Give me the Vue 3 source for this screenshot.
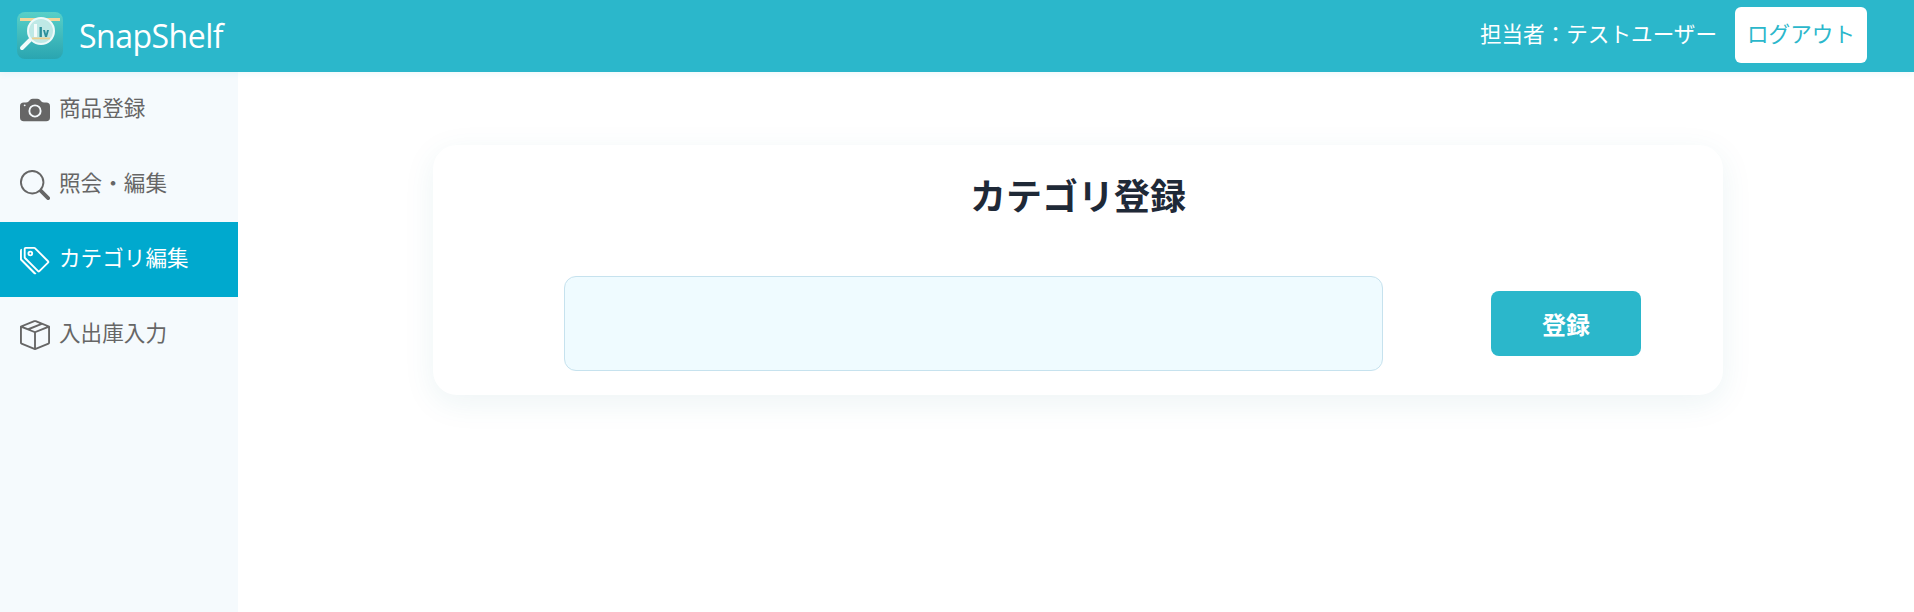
<script setup>
const nav = [
  { label: '商品登録', icon: 'camera' },
  { label: '照会・編集', icon: 'search' },
  { label: 'カテゴリ編集', icon: 'tags', active: true },
  { label: '入出庫入力', icon: 'box' },
]
</script>

<template>
  <div class="page">
    <header class="topbar">
      <div class="brand">
        <svg class="logo" viewBox="0 0 46 47" aria-hidden="true">
          <defs>
            <linearGradient id="lg" x1="0" y1="0" x2="0" y2="1">
              <stop offset="0" stop-color="#58d0c8" />
              <stop offset="1" stop-color="#2aa5b0" />
            </linearGradient>
          </defs>
          <rect width="46" height="47" rx="8" fill="url(#lg)" />
          <rect x="3" y="6" width="40" height="3" fill="#f3d69a" />
          <line x1="13" y1="28" x2="5" y2="36" stroke="#f2fbfb" stroke-width="4" stroke-linecap="round" />
          <circle cx="24" cy="19" r="13" fill="#bfe9e6" stroke="#eefafa" stroke-width="2" />
          <rect x="17" y="12" width="3" height="13" fill="#f4fbfb" />
          <rect x="22.5" y="15" width="2.4" height="10" fill="#2c8f9a" />
          <path d="M26 18h2l1 4 1-4h2l-2 7h-2z" fill="#2c8f9a" />
          <rect x="15" y="25.5" width="18" height="1.8" fill="#ecd08f" />
        </svg>
        <span class="brand-name">SnapShelf</span>
      </div>
      <div class="user">
        <span class="user-name">担当者：テストユーザー</span>
        <button class="logout" type="button">ログアウト</button>
      </div>
    </header>

    <div class="body">
      <aside class="sidebar">
        <a v-for="item in nav" :key="item.label" class="nav-item" :class="{ active: item.active }">
          <svg class="icon" viewBox="0 0 16 16" fill="currentColor" aria-hidden="true">
            <template v-if="item.icon === 'camera'">
              <path d="M10.5 8.5a2.5 2.5 0 1 1-5 0 2.5 2.5 0 0 1 5 0z" />
              <path d="M2 4a2 2 0 0 0-2 2v6a2 2 0 0 0 2 2h12a2 2 0 0 0 2-2V6a2 2 0 0 0-2-2h-1.172a2 2 0 0 1-1.414-.586l-.828-.828A2 2 0 0 0 9.172 2H6.828a2 2 0 0 0-1.414.586l-.828.828A2 2 0 0 1 3.172 4H2zm.5 2a.5.5 0 1 1 0-1 .5.5 0 0 1 0 1zm9 2.5a3.5 3.5 0 1 1-7 0 3.5 3.5 0 0 1 7 0z" />
            </template>
            <path v-else-if="item.icon === 'search'" d="M11.742 10.344a6.5 6.5 0 1 0-1.397 1.398h-.001c.03.04.062.078.098.115l3.85 3.85a1 1 0 0 0 1.415-1.414l-3.85-3.85a1.007 1.007 0 0 0-.115-.1zM12 6.5a5.5 5.5 0 1 1-11 0 5.5 5.5 0 0 1 11 0z" />
            <template v-else-if="item.icon === 'tags'">
              <path d="M3 2v4.586l7 7L14.586 9l-7-7H3zM2 2a1 1 0 0 1 1-1h4.586a1 1 0 0 1 .707.293l7 7a1 1 0 0 1 0 1.414l-4.586 4.586a1 1 0 0 1-1.414 0l-7-7A1 1 0 0 1 2 6.586V2z" />
              <path d="M5.5 5a.5.5 0 1 1 0-1 .5.5 0 0 1 0 1zm0 1a1.5 1.5 0 1 0 0-3 1.5 1.5 0 0 0 0 3zM1 7.086a1 1 0 0 0 .293.707L8.75 15.25l-.043.043a1 1 0 0 1-1.414 0l-7-7A1 1 0 0 1 0 7.586V3a1 1 0 0 1 1-1v5.086z" />
            </template>
            <path v-else d="M8.186 1.113a.5.5 0 0 0-.372 0L1.846 3.5l2.404.961L10.404 2l-2.218-.887zm3.564 1.426L5.596 5 8 5.961 14.154 3.5l-2.404-.961zm3.25 1.7-6.5 2.6v7.922l6.5-2.6V4.24zM7.5 14.762V6.838L1 4.239v7.925l6.5 2.6zM7.443.184a1.5 1.5 0 0 1 1.114 0l7.129 2.852A.5.5 0 0 1 16 3.5v8.662a1 1 0 0 1-.629.928l-7.185 2.874a.5.5 0 0 1-.372 0L.63 13.09a1 1 0 0 1-.63-.928V3.5a.5.5 0 0 1 .314-.464L7.443.184z" />
          </svg>
          <span class="nav-label">{{ item.label }}</span>
        </a>
      </aside>

      <main class="main">
        <section class="card">
          <h1 class="title">カテゴリ登録</h1>
          <form class="form" @submit.prevent>
            <input class="field" type="text" />
            <button class="submit" type="submit">登録</button>
          </form>
        </section>
      </main>
    </div>
  </div>
</template>

<style>
html, body { margin: 0; background: #fff; }
</style>

<style scoped>
.page {
  height: 612px;
  display: flex;
  flex-direction: column;
  overflow: hidden;
  font-family: "Noto Sans CJK JP", "Noto Sans", sans-serif;
}
.topbar {
  height: 72px;
  box-sizing: border-box;
  flex: none;
  position: relative;
  z-index: 1;
  background: #2bb7cb;
  box-shadow: 0 2px 6px rgba(43, 183, 203, 0.08);
  display: flex;
  align-items: center;
  justify-content: space-between;
  padding: 0 47px 2px 17px;
  color: #fff;
}
.brand { display: flex; align-items: center; gap: 16px; }
.logo { width: 46px; height: 47px; display: block; }
.brand-name {
  font-family: "Open Sans", sans-serif;
  font-size: 32px;
  font-weight: 500;
  letter-spacing: -0.5px;
  line-height: 1;
  padding-top: 2px;
}
.user { display: flex; align-items: center; gap: 18px; }
.user-name { font-size: 21.6px; font-weight: 400; padding-bottom: 5px; }
.logout {
  width: 132px;
  height: 56px;
  border: 0;
  border-radius: 6px;
  background: #fff;
  color: #2bb7cb;
  font: 400 21.6px "Noto Sans CJK JP", sans-serif;
  padding: 0 0 5px;
}
.body { flex: 1; display: flex; min-height: 0; }
.sidebar {
  width: 238px;
  flex: none;
  background: #f5fafd;
  display: flex;
  flex-direction: column;
}
.nav-item {
  height: 75px;
  display: flex;
  align-items: center;
  gap: 9px;
  padding-left: 20px;
  color: #666;
  font-size: 21.6px;
  font-weight: 400;
}
.nav-label { padding-bottom: 7px; }
.nav-item.active { background: #00a9ce; color: #fff; }
.icon { width: 30px; height: 30px; flex: none; }
.main { flex: 1; padding: 73px 191px 0 195px; }
.card {
  height: 250px;
  box-sizing: border-box;
  background: #fff;
  border-radius: 24px;
  box-shadow: 0 8px 32px rgba(20, 120, 130, 0.08);
  padding: 24px 82px 0 131px;
}
.title {
  margin: 0 -82px 0 -131px;
  text-align: center;
  font-size: 36px;
  font-weight: 700;
  line-height: 50px;
  color: #1f2937;
}
.form {
  display: flex;
  align-items: center;
  gap: 108px;
  margin-top: 57px;
}
.field {
  flex: 1;
  min-width: 0;
  height: 95px;
  box-sizing: border-box;
  background: #effbff;
  border: 1px solid #c6e2ee;
  border-radius: 12px;
  outline: none;
}
.submit {
  width: 150px;
  height: 65px;
  flex: none;
  border: 0;
  border-radius: 8px;
  background: #2bb7cb;
  color: #fff;
  font: 700 24px "Noto Sans CJK JP", sans-serif;
  padding: 0;
}
</style>
